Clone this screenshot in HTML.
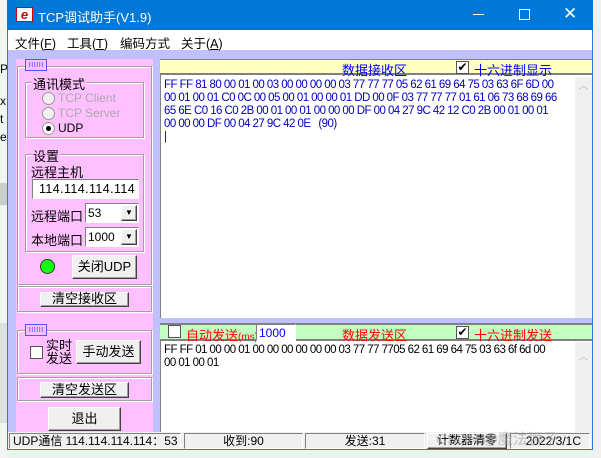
<!DOCTYPE html>
<html><head><meta charset="utf-8"><style>
*{margin:0;padding:0;box-sizing:border-box}
body{width:601px;height:458px;overflow:hidden;background:#f0f0f0;font-family:"Liberation Sans","Noto Sans CJK SC",sans-serif;font-size:12px;position:relative}
.a{position:absolute;white-space:nowrap}
.btn{position:absolute;background:#f0f0f0;border:1px solid #fff;border-right-color:#404040;border-bottom-color:#404040;box-shadow:inset -1px -1px 0 #a0a0a0;text-align:center;font-size:13px;color:#000;white-space:nowrap}
.grp{position:absolute;border:1px solid #a0a0a0;box-shadow:1px 1px 0 #fff inset,1px 1px 0 #fff}
.hex{font-size:11.5px;color:#0000c0;line-height:13px;letter-spacing:-0.55px;white-space:pre}
.rad{position:absolute;width:13px;height:13px;border-radius:50%;background:#f0f0f0;border:1px solid #999}
.cb{position:absolute;width:13px;height:13px;background:#fff;border:1px solid #555;font-size:11px;line-height:11px;text-align:center}
.sunk{position:absolute;border:1px solid #808080;border-right-color:#fff;border-bottom-color:#fff;white-space:nowrap}
</style></head><body>
<div class="a" style="left:0;top:0;width:8px;height:458px;background:#f4f4f4"></div>
<div class="a" style="left:0;top:183px;width:8px;height:22px;background:#ccc"></div>
<div class="a" style="left:0;top:323px;width:8px;height:100px;background:#e0e0e0"></div>
<div class="a" style="left:0;top:62px;font-size:12px">P</div>
<div class="a" style="left:0;top:94px">x</div><div class="a" style="left:0;top:112px">t</div><div class="a" style="left:0;top:130px">e</div>
<div class="a" style="left:7px;top:0;width:586px;height:450px;border:1px solid #2b7bd4;background:#c0c0ff"></div>
<div class="a" style="left:7px;top:0;width:586px;height:30px;background:#0078d7"></div>
<div class="a" style="left:16px;top:7px;width:17px;height:15px;background:#fff;border:1px solid #c00;color:#c00;font-weight:bold;font-style:italic;font-size:13px;line-height:13px;text-align:center">e</div>
<div class="a" style="left:38px;top:7px;color:#fff;font-size:13px">TCP调试助手(V1.9)</div>
<div class="a" style="left:473px;top:14px;width:11px;height:1px;background:#fff"></div>
<div class="a" style="left:519px;top:9px;width:11px;height:11px;border:1px solid #fff"></div>
<div class="a" style="left:563px;top:4px;color:#fff;font-size:17px">✕</div>
<div class="a" style="left:8px;top:30px;width:584px;height:20px;background:#fff"></div>
<div class="a" style="left:15px;top:33px;font-size:12.5px">文件(<u>F</u>)</div>
<div class="a" style="left:67px;top:33px;font-size:12.5px">工具(<u>T</u>)</div>
<div class="a" style="left:120px;top:33px;font-size:12.5px">编码方式</div>
<div class="a" style="left:181px;top:33px;font-size:12.5px">关于(<u>A</u>)</div>
<div class="a" style="left:16px;top:59px;width:137px;height:373px;background:#ffc0ff"></div>
<div class="grp" style="left:17px;top:66px;width:135px;height:219px"></div>
<div class="a" style="left:25px;top:59px;width:22px;height:12px;background:#ffc0ff;border:1px solid #55f;color:#55f;font-size:9px;line-height:9px;text-align:center">ıııııı</div>
<div class="grp" style="left:25px;top:82px;width:119px;height:56px"></div>
<div class="a" style="left:32px;top:74px;background:#ffc0ff;font-size:13px;padding:0 1px">通讯模式</div>
<div class="rad" style="left:42px;top:92px"></div><div class="a" style="left:58px;top:91px;color:#aaa">TCP Client</div>
<div class="rad" style="left:42px;top:107px"></div><div class="a" style="left:58px;top:106px;color:#aaa">TCP Server</div>
<div class="rad" style="left:42px;top:122px;background:#fff"></div><div class="a" style="left:46px;top:126px;width:5px;height:5px;border-radius:50%;background:#000"></div><div class="a" style="left:58px;top:121px">UDP</div>
<div class="grp" style="left:25px;top:154px;width:119px;height:98px"></div>
<div class="a" style="left:32px;top:146px;background:#ffc0ff;font-size:13px;padding:0 1px">设置</div>
<div class="a" style="left:31px;top:162px;font-size:13px">远程主机</div>
<div class="sunk" style="left:32px;top:179px;width:107px;height:20px;background:#fff;font-size:12.5px;padding:2px 0 0 6px;letter-spacing:0.4px">114.114.114.114</div>
<div class="a" style="left:31px;top:206px;font-size:13px">远程端口</div>
<div class="sunk" style="left:85px;top:203px;width:54px;height:20px;background:#fff;padding:2px 0 0 2px">53</div>
<div class="btn" style="left:121px;top:205px;width:16px;height:16px;font-size:8px;line-height:14px">▼</div>
<div class="a" style="left:31px;top:230px;font-size:13px">本地端口</div>
<div class="sunk" style="left:85px;top:227px;width:54px;height:20px;background:#fff;padding:2px 0 0 2px">1000</div>
<div class="btn" style="left:121px;top:229px;width:16px;height:16px;font-size:8px;line-height:14px">▼</div>
<div class="a" style="left:40px;top:259px;width:15px;height:15px;border-radius:50%;background:#1f1;border:1px solid #333"></div>
<div class="btn" style="left:72px;top:255px;width:65px;height:24px;line-height:21px">关闭UDP</div>
<div class="grp" style="left:17px;top:286px;width:135px;height:26px"></div>
<div class="btn" style="left:40px;top:292px;width:89px;height:15px;line-height:12px">清空接收区</div>
<div class="grp" style="left:17px;top:330px;width:135px;height:44px"></div>
<div class="a" style="left:25px;top:324px;width:22px;height:12px;background:#ffc0ff;border:1px solid #55f;color:#55f;font-size:9px;line-height:9px;text-align:center">ıııııı</div>
<div class="cb" style="left:30px;top:346px"></div>
<div class="a" style="left:46px;top:339px;font-size:13px;line-height:13px">实时<br>发送</div>
<div class="btn" style="left:76px;top:340px;width:65px;height:24px;line-height:21px">手动发送</div>
<div class="grp" style="left:17px;top:377px;width:135px;height:24px"></div>
<div class="btn" style="left:40px;top:382px;width:89px;height:16px;line-height:13px">清空发送区</div>
<div class="btn" style="left:48px;top:407px;width:73px;height:24px;line-height:21px">退出</div>
<div class="a" style="left:160px;top:59px;width:432px;height:373px;background:#fff;border-left:1px solid #808080"></div>
<div class="a" style="left:160px;top:59px;width:432px;height:16px;background:#ffffc0;border-top:1px solid #808080;border-bottom:2px solid #808080"></div>
<div class="a" style="left:342px;top:60px;color:#0000ff;font-size:13px">数据接收区</div>
<div class="cb" style="left:456px;top:61px;font-size:12px">✔</div>
<div class="a" style="left:474px;top:60px;color:#0000ff;font-size:13px">十六进制显示</div>
<div class="a hex" style="left:164px;top:79px">FF FF 81 80 00 01 00 03 00 00 00 00 03 77 77 77 05 62 61 69 64 75 03 63 6F 6D 00
00 01 00 01 C0 0C 00 05 00 01 00 00 01 DD 00 0F 03 77 77 77 01 61 06 73 68 69 66
65 6E C0 16 C0 2B 00 01 00 01 00 00 00 DF 00 04 27 9C 42 12 C0 2B 00 01 00 01
00 00 00 DF 00 04 27 9C 42 0E   (90)
|</div>
<div class="a" style="left:575px;top:77px;width:17px;height:241px;background:#f0f0f0;color:#bbb;text-align:center;font-size:10px">︿</div>
<div class="a" style="left:160px;top:318px;width:432px;height:5px;background:#c0c0ff"></div>
<div class="a" style="left:160px;top:323px;width:432px;height:18px;background:#c0ffc0;border-top:2px solid #808080;border-bottom:2px solid #808080"></div>
<div class="cb" style="left:168px;top:325px"></div>
<div class="a" style="left:186px;top:325px;color:#f00;font-size:13px">自动发送<span style="font-size:10px">(ms)</span></div>
<div class="sunk" style="left:256px;top:324px;width:40px;height:17px;background:#fff;color:#00f;padding:1px 0 0 2px">1000</div>
<div class="a" style="left:342px;top:325px;color:#f00;font-size:13px">数据发送区</div>
<div class="cb" style="left:456px;top:326px;font-size:12px">✔</div>
<div class="a" style="left:474px;top:325px;color:#f00;font-size:13px">十六进制发送</div>
<div class="a hex" style="left:164px;top:344px;color:#000">FF FF 01 00 00 01 00 00 00 00 00 00 03 77 77 7705 62 61 69 64 75 03 63 6f 6d 00
00 01 00 01</div>
<div class="a" style="left:575px;top:342px;width:17px;height:90px;background:#f0f0f0;color:#bbb;text-align:center;font-size:10px;padding-top:6px">︿</div>
<div class="a" style="left:8px;top:432px;width:584px;height:17px;background:#f0f0f0"></div>
<div class="sunk" style="left:9px;top:433px;width:172px;height:16px;padding-left:3px;line-height:14px">UDP通信 114.114.114.114：53</div>
<div class="sunk" style="left:184px;top:433px;width:119px;height:16px;text-align:center;line-height:14px">收到:90</div>
<div class="sunk" style="left:305px;top:433px;width:120px;height:16px;text-align:center;line-height:14px">发送:31</div>
<div class="btn" style="left:427px;top:433px;width:80px;height:16px;font-size:12px;line-height:13px">计数器清零</div>
<div class="sunk" style="left:510px;top:433px;width:80px;height:16px;text-align:right;line-height:14px;padding-right:8px">2022/3/1C</div>
<div class="a" style="left:436px;top:428px;color:rgba(160,160,160,0.6);font-size:15px">CSDN @魔法狮子</div>
</body></html>
